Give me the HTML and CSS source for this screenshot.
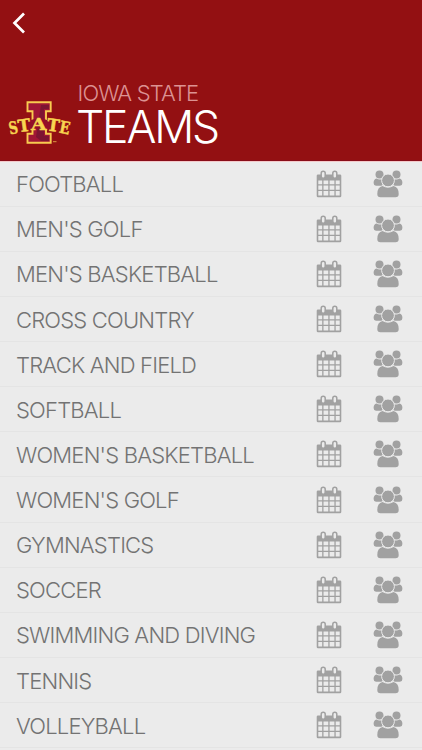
FILE: index.html
```html
<!DOCTYPE html>
<html lang="en">
<head>
<meta charset="utf-8">
<title>Iowa State Teams</title>
<link rel="stylesheet" href="styles.css">
</head>
<body>
<header class="header">
  <svg class="back" viewBox="0 0 14 22" aria-label="Back"><path d="M12 1.5 2.500 11 12 20.500"/></svg>
  <div class="brand">
    <svg class="logo" viewBox="0 0 62 46">
      <path class="logo-i" d="M19.500 2.300H42.700V11.300H38V33.800H42.700V42.800H19.500V33.800H24.500V11.300H19.500Z"/>
      <path class="logo-shade" d="M33 5H41V9H36V36H41V41H33L28 37Z"/>
      <path class="logo-band" d="M20 21Q31 16 42 21V30Q31 27 20 30Z"/>
      <g class="logo-letters">
        <text transform="translate(2 34.500) rotate(-11)" textLength="9" lengthAdjust="spacingAndGlyphs">S</text>
        <text transform="translate(10.800 32.300) rotate(-8)" textLength="12.500" lengthAdjust="spacingAndGlyphs">T</text>
        <text transform="translate(23 30)" textLength="15.500" lengthAdjust="spacingAndGlyphs">A</text>
        <text transform="translate(38.200 30.300) rotate(8)" textLength="12.500" lengthAdjust="spacingAndGlyphs">T</text>
        <text transform="translate(50.500 32.500) rotate(11)" textLength="10.500" lengthAdjust="spacingAndGlyphs">E</text>
      </g>
      <path class="logo-tm" d="M45 41.700H48.500"/>
    </svg>
    <div class="titles">
      <div class="school">IOWA STATE</div>
      <h1 class="title">TEAMS</h1>
    </div>
  </div>
</header>
<svg class="sprite">
  <symbol id="cal" viewBox="0 0 26 28">
    <path fill-rule="evenodd" d="M2 4.500H24Q25.300 4.500 25.300 5.800V26Q25.300 27.300 24 27.300H2Q.7 27.300.7 26V5.800Q.7 4.500 2 4.500ZM2.300 10.500V14.300H6.200V10.500ZM7.500 10.500V14.300H12.300V10.500ZM13.600 10.500V14.300H18.400V10.500ZM19.700 10.500V14.300H23.700V10.500ZM2.300 15.600V19.800H6.200V15.600ZM7.500 15.600V19.800H12.300V15.600ZM13.600 15.600V19.800H18.400V15.600ZM19.700 15.600V19.800H23.700V15.600ZM2.300 21.100V25.600H6.200V21.100ZM7.500 21.100V25.600H12.300V21.100ZM13.600 21.100V25.600H18.400V21.100ZM19.700 21.100V25.600H23.700V21.100Z"/>
    <g class="ring"><rect x="5.200" y="1.200" width="4" height="7" rx="2"/><rect x="16.800" y="1.200" width="4" height="7" rx="2"/></g>
  </symbol>
  <symbol id="people" viewBox="0 0 30 28">
    <circle cx="6.500" cy="4.500" r="4"/><circle cx="23.500" cy="4.500" r="4"/>
    <path d="M3.500 8.500Q6.500 10.500 9.500 8.700V15Q9 15.800 8 15.800H3Q.6 15.500.6 13 .6 9 3.500 8.500ZM26.500 8.500Q23.500 10.500 20.500 8.700V15Q21 15.800 22 15.800H27Q29.400 15.500 29.400 13 29.400 9 26.500 8.500Z"/>
    <circle class="front" cx="15" cy="10.400" r="6.400"/>
    <path d="M9.500 16Q15 19.300 20.500 16 25.700 17 25.700 24 25.700 27.300 22.500 27.300H7.500Q4.300 27.300 4.300 24 4.300 17 9.500 16Z"/>
  </symbol>
</svg>
<main id="teams" class="teams"></main>
<script src="teams.js"></script>
</body>
</html>
```
FILE: styles.css
```css
* { box-sizing: border-box; }
body { margin: 0; height: 750px; overflow: hidden; background: #ebebeb; font-family: Inter, "Liberation Sans", sans-serif; font-weight: 300; }
.header { height: 161px; background: #931012; border-bottom: 1px solid #880c18; padding: 12px 0 0 12px; }
.back { display: block; width: 14px; height: 22px; fill: none; stroke: #fff; stroke-width: 2.7; }
.brand { display: flex; margin: 46px 0 0 -4px; }
.logo { width: 62px; height: 46px; margin: 20px 8px 0 0; overflow: visible; }
.logo-i { fill: #a01635; stroke: #f8cb50; stroke-width: 1.9; }
.logo-shade { fill: #7d1432; }
.logo-band { fill: #931028; }
.logo-letters { font: bold 17px "DejaVu Serif", serif; fill: #f8d550; stroke: #f8d550; stroke-width: .5; }
.logo-tm { stroke: #d99b43; stroke-width: 1; }
.titles { margin-left: -1px; }
.school { font-size: 22px; line-height: 26px; color: #dc9292; letter-spacing: -.870px; padding-left: .5px; }
.title { margin: 0 0 0 -1px; font-size: 44.500px; line-height: 42px; font-weight: 300; color: #fff; letter-spacing: -2.200px; }
.sprite { display: none; }
.teams { border-top: 1px solid #f3c9ca; }
.team { display: flex; align-items: center; height: 45.130px; padding: 0 19px 0 16px; border-bottom: 1px solid #e4e4e4; color: #737373; }
.team:first-child { height: 44.700px; }
.name { flex: 1; font-size: 22px; line-height: 28px; padding-top: 1px; letter-spacing: -.800px; white-space: nowrap; }
.icon { fill: #a1a1a1; height: 28px; flex: none; }
.calendar { width: 26px; margin-right: 31px; }
.people { width: 30px; }
.ring { fill: #ebebeb; stroke: #a1a1a1; stroke-width: 1.5; }
.front { stroke: #ebebeb; stroke-width: 1; }
```
FILE: teams.js
```js
const teams = ["FOOTBALL", "MEN'S GOLF", "MEN'S BASKETBALL", "CROSS COUNTRY", "TRACK AND FIELD", "SOFTBALL", "WOMEN'S BASKETBALL", "WOMEN'S GOLF", "GYMNASTICS", "SOCCER", "SWIMMING AND DIVING", "TENNIS", "VOLLEYBALL"];
document.getElementById("teams").innerHTML = teams.map(name => `<div class="team"><span class="name">${name}</span><svg class="icon calendar"><use href="#cal"/></svg><svg class="icon people"><use href="#people"/></svg></div>`).join("");
```
